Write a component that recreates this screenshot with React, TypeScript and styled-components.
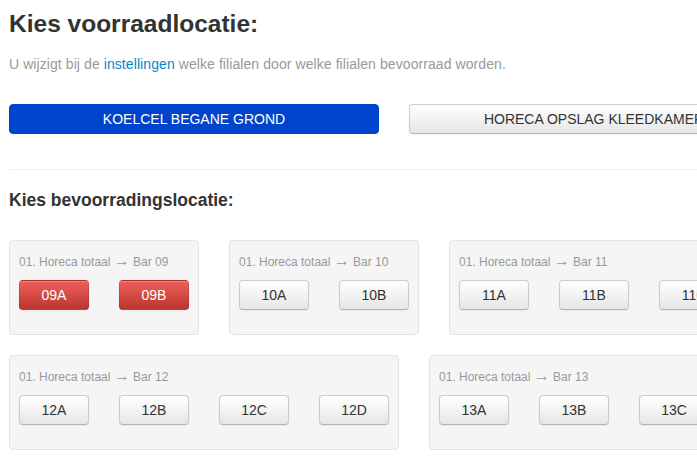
import React from "react";
import styled, { createGlobalStyle, css } from "styled-components";

const Global = createGlobalStyle`
  html, body { margin: 0; padding: 0; overflow: hidden; background: #fff; }
  body { font-family: "Liberation Sans", Arial, Helvetica, sans-serif; color: #333; }
`;

const Page = styled.div`
  width: 940px;
  padding: 4px 9px 0;
`;

const Title = styled.h3`
  margin: 0;
  font-size: 24.5px;
  line-height: 40px;
  font-weight: bold;
  color: #333;
`;

const Intro = styled.p`
  margin: 10px 0 0;
  font-size: 14px;
  letter-spacing: 0.08px;
  line-height: 20px;
  color: #999;
`;

const Link = styled.a`
  color: #0088cc;
  text-decoration: none;
`;

const LocationRow = styled.div`
  display: flex;
  gap: 30px;
  margin-top: 30px;
`;

const baseBtn = css`
  box-sizing: border-box;
  border-radius: 4px;
  font-family: "Liberation Sans", Arial, Helvetica, sans-serif;
  font-size: 14px;
  text-align: center;
  cursor: pointer;
  padding: 0;
`;

const LocationButton = styled.button<{ $active?: boolean }>`
  ${baseBtn}
  width: 370px;
  height: 30px;
  flex: none;
  text-transform: uppercase;
  ${(p) =>
    p.$active
      ? css`
          background: #0044cc;
          border: 1px solid #0044cc;
          color: #fff;
        `
      : css`
          background: linear-gradient(#ffffff, #e6e6e6);
          border: 1px solid #cccccc;
          border-bottom-color: #b3b3b3;
          color: #333;
          box-shadow: inset 0 1px 0 rgba(255, 255, 255, 0.2), 0 1px 2px rgba(0, 0, 0, 0.05);
        `}
`;

const Divider = styled.hr`
  margin: 35px 0 0;
  border: 0;
  border-top: 1px solid #eeeeee;
  height: 0;
`;

const SubTitle = styled.h4`
  margin: 20px 0 0;
  font-size: 17.5px;
  line-height: 20px;
  font-weight: bold;
  color: #333;
`;

const Cards = styled.div`
  display: flex;
  flex-wrap: wrap;
  column-gap: 30px;
  row-gap: 20px;
  margin-top: 30px;
`;

const Card = styled.div`
  box-sizing: border-box;
  background: #f5f5f5;
  border: 1px solid #e3e3e3;
  border-radius: 4px;
  padding: 11px 9px 24px;
  flex: none;
`;

const CardLabel = styled.div`
  font-size: 12px;
  line-height: 20px;
  color: #999;
`;

const Arrow = styled.span`
  font-family: "Liberation Sans", Arial, sans-serif;
  font-size: 16px;
  line-height: 1;
`;

const ButtonRow = styled.div`
  display: flex;
  gap: 30px;
  margin-top: 8px;
`;

const SpotButton = styled.button<{ $danger?: boolean }>`
  ${baseBtn}
  width: 70px;
  height: 30px;
  ${(p) =>
    p.$danger
      ? css`
          background: linear-gradient(#ee5f5b, #bd362f);
          border: 1px solid rgba(0, 0, 0, 0.1);
          border-bottom-color: rgba(0, 0, 0, 0.25);
          color: #fff;
          box-shadow: inset 0 1px 0 rgba(255, 255, 255, 0.2), 0 1px 2px rgba(0, 0, 0, 0.05);
        `
      : css`
          background: linear-gradient(#ffffff, #e6e6e6);
          border: 1px solid #cccccc;
          border-bottom-color: #b3b3b3;
          color: #333;
          box-shadow: inset 0 1px 0 rgba(255, 255, 255, 0.2), 0 1px 2px rgba(0, 0, 0, 0.05);
        `}
`;

const bars = [
  { bar: "09", spots: ["09A", "09B"], danger: true },
  { bar: "10", spots: ["10A", "10B"] },
  { bar: "11", spots: ["11A", "11B", "11C"] },
  { bar: "12", spots: ["12A", "12B", "12C", "12D"] },
  { bar: "13", spots: ["13A", "13B", "13C"] },
];

export default function App() {
  return (
    <>
      <Global />
      <Page>
        <Title>Kies voorraadlocatie:</Title>
        <Intro>
          U wijzigt bij de <Link href="#">instellingen</Link> welke filialen door welke filialen bevoorraad worden.
        </Intro>
        <LocationRow>
          <LocationButton $active>Koelcel begane grond</LocationButton>
          <LocationButton>Horeca opslag kleedkamer</LocationButton>
        </LocationRow>
        <Divider />
        <SubTitle>Kies bevoorradingslocatie:</SubTitle>
        <Cards>
          {bars.map((b) => (
            <Card key={b.bar}>
              <CardLabel>
                01. Horeca totaal <Arrow>→</Arrow> Bar {b.bar}
              </CardLabel>
              <ButtonRow>
                {b.spots.map((s) => (
                  <SpotButton key={s} $danger={b.danger}>
                    {s}
                  </SpotButton>
                ))}
              </ButtonRow>
            </Card>
          ))}
        </Cards>
      </Page>
    </>
  );
}
